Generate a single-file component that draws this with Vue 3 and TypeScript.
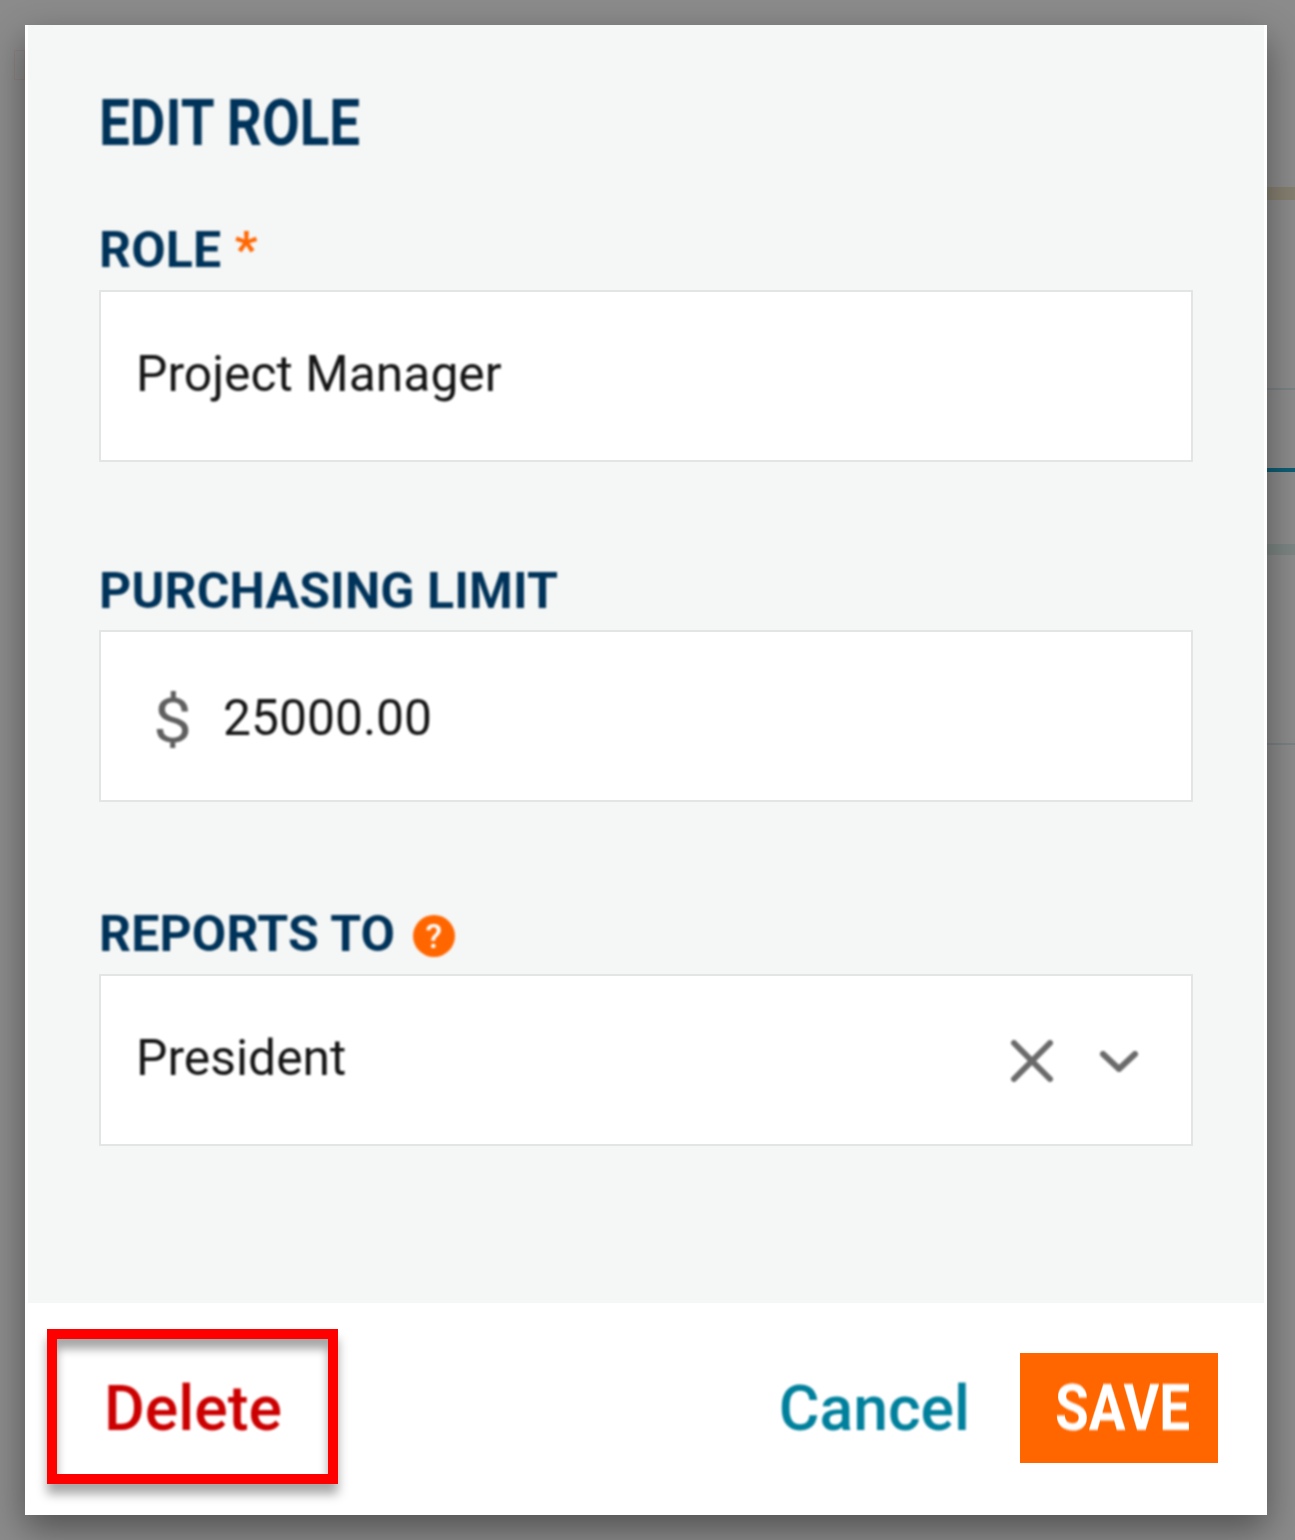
<template>
  <div class="backdrop">
    <i class="bg-line tan"></i>
    <i class="bg-line thin l1"></i>
    <i class="bg-line teal"></i>
    <i class="bg-line band"></i>
    <i class="bg-line thin l2"></i>
    <i class="bg-mark"></i>

    <div class="modal">
      <div class="modal-body">
        <h1 class="title"><span class="narrow">EDIT ROLE</span></h1>

        <div class="group">
          <label class="label">ROLE <span class="req">*</span></label>
          <div class="field">
            <span class="value role-value">{{ role }}</span>
          </div>
        </div>

        <div class="group">
          <label class="label">PURCHASING LIMIT</label>
          <div class="field">
            <span class="dollar">$</span>
            <span class="value">{{ limit }}</span>
          </div>
        </div>

        <div class="group">
          <label class="label label-help">REPORTS TO <span class="help">?</span></label>
          <div class="field">
            <span class="value role-value">{{ reportsTo }}</span>
            <svg class="clear" width="42" height="42" viewBox="0 0 42 42">
              <path d="M3 3 L39 39 M39 3 L3 39" />
            </svg>
            <svg class="chevron" width="40" height="24" viewBox="0 0 40 24">
              <path d="M4 5 L20 20 L36 5" />
            </svg>
          </div>
        </div>
      </div>

      <div class="modal-footer">
        <button class="btn-delete">Delete</button>
        <div class="highlight"></div>
        <div class="footer-right">
          <button class="btn-cancel">Cancel</button>
          <button class="btn-save"><span class="narrow">SAVE</span></button>
        </div>
      </div>
    </div>
  </div>
</template>

<script setup lang="ts">
const role = "Project Manager";
const limit = "25000.00";
const reportsTo = "President";
</script>

<style>
body {
  margin: 0;
  background: #8a8a8a;
}
</style>

<style scoped>
.backdrop {
  position: relative;
  width: 1295px;
  height: 1540px;
  padding: 25px 28px 25px 25px;
  box-sizing: border-box;
  overflow: hidden;
  background: #8b8b8b;
  font-family: Roboto, "Liberation Sans", sans-serif;
}

.bg-line {
  position: absolute;
  right: 0;
  width: 40px;
}
.tan { top: 187px; height: 13px; background: #857f70; }
.thin { height: 2px; background: #7a8283; }
.l1 { top: 388px; }
.l2 { top: 743px; }
.teal { top: 468px; height: 4px; background: #0f5c72; }
.band { top: 544px; height: 11px; background: #7c8583; }
.bg-mark {
  position: absolute;
  left: 14px;
  top: 50px;
  width: 11px;
  height: 30px;
  border: 1px solid #8f8080;
  box-sizing: border-box;
}

.modal {
  position: relative;
  width: 1242px;
  height: 1490px;
  display: flex;
  flex-direction: column;
  background: #fff;
  box-shadow: 0 14px 34px rgba(0, 0, 0, 0.42);
}

.modal-body {
  height: 1278px;
  box-sizing: border-box;
  margin: 0 3px 0 3px;
  padding: 61px 71px 0 71px;
  background: #f5f7f6;
}

.title {
  margin: 0 0 60px;
  height: 76px;
  font-size: 64px;
  line-height: 76px;
  font-weight: 700;
  color: #00335a;
  filter: blur(0.8px);
}

.narrow {
  display: inline-block;
  transform: scaleX(0.856);
  transform-origin: left center;
  white-space: nowrap;
}

.group {
  margin-bottom: 101px;
}

.label {
  display: flex;
  align-items: center;
  height: 56px;
  margin-bottom: 11px;
  font-size: 50px;
  font-weight: 700;
  letter-spacing: 0.15px;
  color: #00335a;
  white-space: pre;
  filter: blur(0.8px);
}

.group:first-of-type .label {
  margin-bottom: 12px;
}

.label-help {
  height: 62px;
  margin-bottom: 9px;
  gap: 5px;
}

.req {
  margin-left: 1px;
  color: #ff6600;
}

.help {
  position: relative;
  top: 2px;
  width: 42px;
  height: 42px;
  border-radius: 50%;
  background: #ff6600;
  color: #fff;
  font-size: 34px;
  font-weight: 500;
  line-height: 42px;
  text-align: center;
}

.field {
  display: flex;
  align-items: center;
  height: 172px;
  box-sizing: border-box;
  padding: 0 52px 0 35px;
  background: #fff;
  border: 2px solid #e3e5e5;
}

.value {
  position: relative;
  top: 2px;
  font-size: 49.8px;
  line-height: 60px;
  color: #151515;
  filter: blur(0.8px);
}

.role-value {
  top: -2px;
}

.dollar {
  position: relative;
  top: 5px;
  width: 87px;
  padding-left: 17px;
  box-sizing: border-box;
  font-size: 61px;
  font-weight: 400;
  color: #5f5f5f;
  transform: scaleX(1.14);
  transform-origin: 17px center;
  filter: blur(0.8px);
}

.clear {
  margin-left: auto;
  margin-top: 2px;
  filter: blur(0.8px);
}
.clear path {
  fill: none;
  stroke: #6a6a6a;
  stroke-width: 6;
  stroke-linecap: round;
}

.chevron {
  margin-left: 46px;
  margin-top: 2px;
  filter: blur(0.8px);
}
.chevron path {
  fill: none;
  stroke: #6a6a6a;
  stroke-width: 6;
  stroke-linecap: round;
  stroke-linejoin: round;
}

.modal-footer {
  position: relative;
  flex: 1;
  display: flex;
  align-items: center;
  justify-content: space-between;
  padding: 0 49px 2px 79px;
}

button {
  border: 0;
  padding: 0;
  background: none;
  font-family: inherit;
}

.btn-delete {
  font-size: 62.5px;
  font-weight: 500;
  color: #cc0000;
  filter: blur(0.8px);
}

.highlight {
  position: absolute;
  left: 22px;
  top: 26px;
  width: 291px;
  height: 155px;
  box-sizing: border-box;
  border: 10px solid #ff0000;
  box-shadow: 0 10px 10px rgba(0, 0, 0, 0.35), inset 0 10px 10px rgba(0, 0, 0, 0.35);
  pointer-events: none;
}

.footer-right {
  display: flex;
  align-items: center;
  gap: 50px;
}

.btn-cancel {
  font-size: 62.5px;
  font-weight: 500;
  color: #00809c;
  filter: blur(0.8px);
}

.btn-save {
  width: 198px;
  height: 110px;
  background: #ff6600;
  color: #fff;
  font-size: 64px;
  font-weight: 700;
  text-align: left;
  padding-left: 35px;
  box-sizing: border-box;
}

.btn-save .narrow {
  filter: blur(0.8px);
}
</style>
